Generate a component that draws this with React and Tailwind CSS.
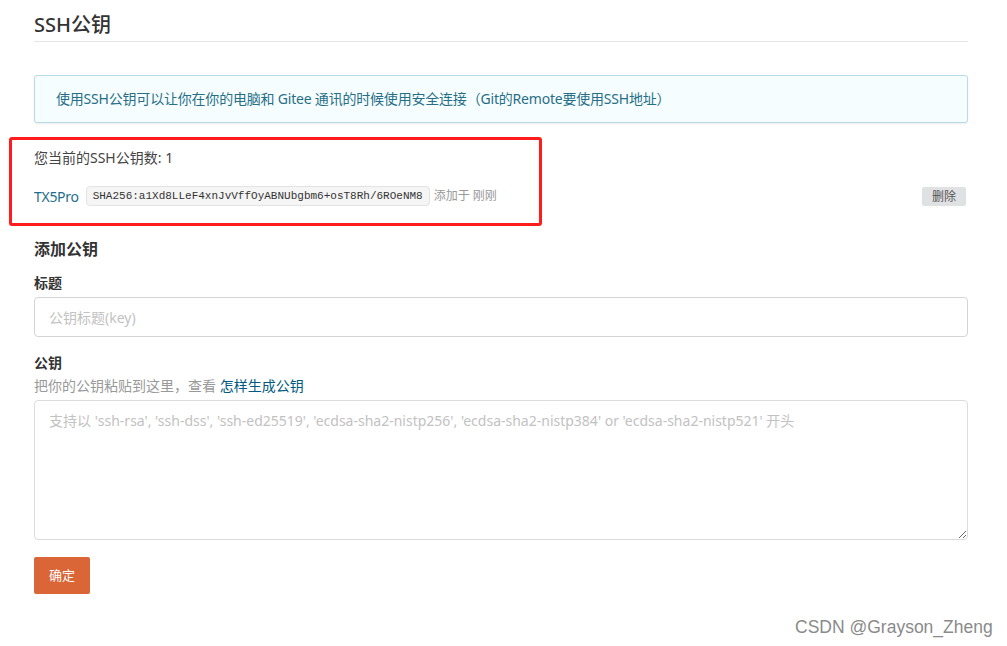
export default function App() {
  const sans = { fontFamily: '"Noto Sans", "Noto Sans CJK SC", sans-serif' }

  return (
    <div className="relative w-full h-[646px] bg-white overflow-hidden text-[#333]" style={sans}>
      <div className="ml-[34px] w-[934px] pt-[12px]">
        <div className="border-b border-[#e5e5e5] pb-[3px]">
          <h2 className="text-[20px] leading-[26px] font-medium text-[#333]">SSH公钥</h2>
        </div>

        <div className="mt-[33px] border border-[#b6dce6] bg-[#f6fdff] rounded-[3px] px-[21px] py-[12px] shadow-[0_1px_2px_rgba(0,0,0,0.08)]">
          <p className="text-[14px] leading-[22px] tracking-[-0.2px] text-[#276f86]">
            使用SSH公钥可以让你在你的电脑和 Gitee 通讯的时候使用安全连接（Git的Remote要使用SSH地址）
          </p>
        </div>

        <div className="mt-[25px] text-[14px] leading-[20px] text-[#444]">您当前的SSH公钥数: 1</div>

        <div className="mt-[18px] flex items-center justify-between h-[20px]">
          <div className="flex items-center">
            <span className="text-[14px] tracking-[-0.3px] text-[#1f6e8c]">TX5Pro</span>
            <code
              className="ml-[7px] h-[20px] flex items-center px-[6px] bg-[#f5f5f5] border border-[#e3e3e3] rounded-[4px] text-[11px] text-[#333]"
              style={{ fontFamily: '"Liberation Mono", monospace' }}
            >
              SHA256:a1Xd8LLeF4xnJvVffOyABNUbgbm6+osT8Rh/6ROeNM8
            </code>
            <span className="ml-[4px] text-[12px] text-[#999]">添加于 刚刚</span>
          </div>
          <button className="mr-[2px] h-[19px] w-[44px] bg-[#e0e1e2] rounded-[2px] text-[12px] text-[#555] leading-[19px]">
            删除
          </button>
        </div>

        <h3 className="mt-[31px] text-[16px] leading-[24px] font-bold text-[#333]">添加公钥</h3>

        <label className="block mt-[12px] text-[14px] leading-[20px] font-bold text-[#333]">标题</label>
        <input
          className="mt-[4px] block w-full h-[40px] border border-[#d4d4d8] rounded-[4px] px-[14px] text-[14px] placeholder:text-[#c2c2c2] outline-none"
          placeholder="公钥标题(key)"
        />

        <label className="block mt-[16px] text-[14px] leading-[20px] font-bold text-[#333]">公钥</label>
        <p className="mt-[3px] text-[14px] leading-[20px] text-[#999]">
          把你的公钥粘贴到这里，查看 <a className="text-[#005980]">怎样生成公钥</a>
        </p>
        <textarea
          className="mt-[4px] block w-full h-[140px] border border-[#dcdce0] rounded-[4px] px-[14px] py-[10px] text-[14px] leading-[20px] placeholder:text-[#c2c2c2] outline-none"
          placeholder="支持以 'ssh-rsa', 'ssh-dss', 'ssh-ed25519', 'ecdsa-sha2-nistp256', 'ecdsa-sha2-nistp384' or 'ecdsa-sha2-nistp521' 开头"
        />

        <button className="mt-[17px] h-[37px] w-[56px] bg-[#da6536] rounded-[2px] text-white text-[13px]">确定</button>
      </div>

      <div className="absolute left-[9px] top-[137px] w-[533px] h-[89px] border-[3px] border-[#ff1c1c] rounded-[3px]" />

      <div
        className="absolute left-[795px] top-[616px] text-[17.5px] leading-[22px] text-[#8a8a8a]"
        style={{ fontFamily: '"Liberation Sans", sans-serif' }}
      >
        CSDN @Grayson_Zheng
      </div>
    </div>
  )
}
